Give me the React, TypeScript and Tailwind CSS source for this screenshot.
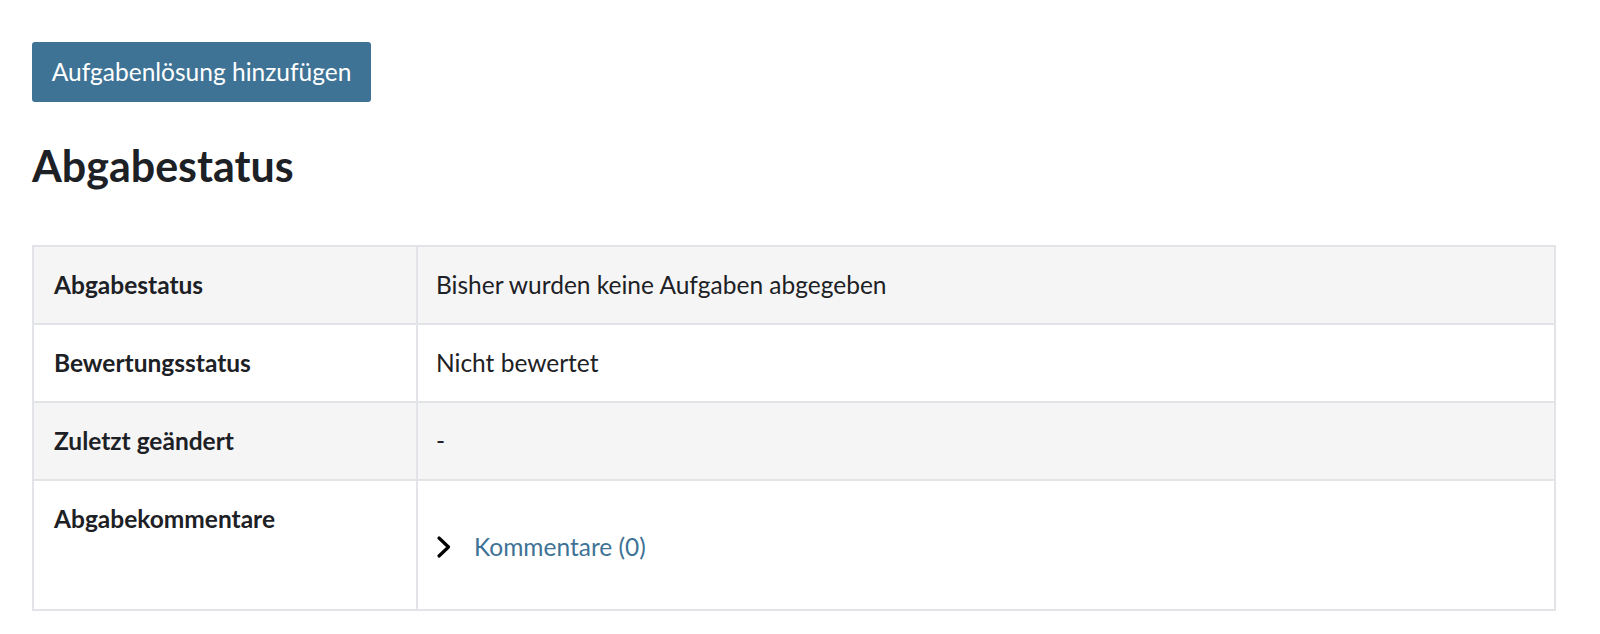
const rows = [
  { label: "Abgabestatus", value: "Bisher wurden keine Aufgaben abgegeben", striped: true },
  { label: "Bewertungsstatus", value: "Nicht bewertet", striped: false },
  { label: "Zuletzt geändert", value: "-", striped: true },
]

function Chevron() {
  return (
    <svg width="16" height="24" viewBox="0 0 16 24" fill="none" className="shrink-0">
      <path d="M3 3 L12.5 12 L3 21" stroke="#000" strokeWidth="3.2" strokeLinecap="round" strokeLinejoin="round" />
    </svg>
  )
}

export default function App() {
  return (
    <main className="min-h-screen bg-white px-[32px] pt-[42px] font-['Lato','Liberation_Sans',sans-serif] text-[#1d2125]">
      <button
        type="button"
        className="h-[60px] w-[339px] rounded-[3px] bg-[#3e7396] text-[24.5px] leading-[36px] text-white"
      >
        Aufgabenlösung hinzufügen
      </button>

      <h2 className="mt-[39px] text-[43px] font-bold leading-[50px]">Abgabestatus</h2>

      <table className="mt-[54px] w-[1524px] border-collapse text-[24.5px] leading-[36px]">
        <tbody>
          {rows.map((row) => (
            <tr key={row.label} className={row.striped ? "bg-[#f5f5f5]" : "bg-white"}>
              <th className="w-[384px] border-2 border-[#e2e4e8] px-[20px] py-[20px] text-left font-bold">
                {row.label}
              </th>
              <td className="border-2 border-[#e2e4e8] px-[18px] py-[20px]">{row.value}</td>
            </tr>
          ))}
          <tr className="bg-white">
            <th className="h-[130px] border-2 border-[#e2e4e8] px-[20px] py-[20px] text-left align-top font-bold">
              Abgabekommentare
            </th>
            <td className="border-2 border-[#e2e4e8] px-[18px] py-[20px] align-top">
              <div className="mt-[28px] flex items-center">
                <Chevron />
                <a href="#" className="ml-[22px] text-[#3e7396]">
                  Kommentare (0)
                </a>
              </div>
            </td>
          </tr>
        </tbody>
      </table>
    </main>
  )
}
